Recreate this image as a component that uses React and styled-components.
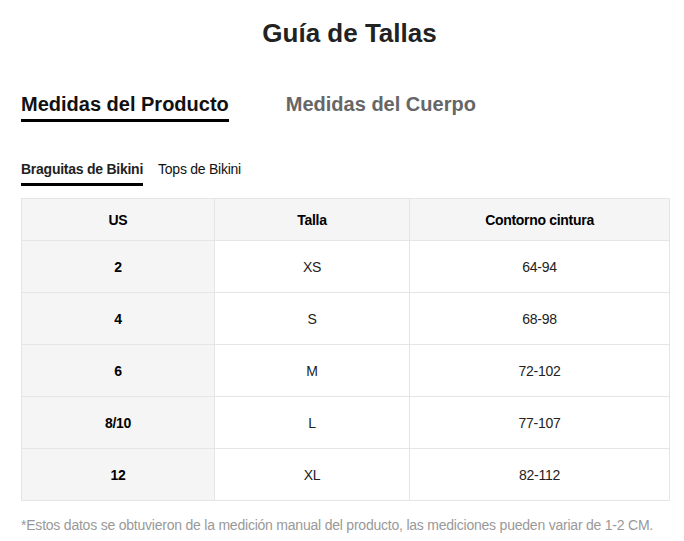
import React, { useState } from "react";
import styled, { createGlobalStyle } from "styled-components";

const Global = createGlobalStyle`
  html, body { margin: 0; padding: 0; background: #fff; }
  body { font-family: "Liberation Sans", Arial, sans-serif; color: #222; }
  * { box-sizing: border-box; }
`;

const Page = styled.div`
  width: 684px;
  padding: 18px 14px 0 21px;
`;

const Title = styled.h1`
  margin: 0;
  text-align: center;
  font-size: 26px;
  font-weight: 700;
  line-height: 30px;
  color: #222;
  padding-left: 8px;
`;

const MainTabs = styled.div`
  display: flex;
  gap: 57px;
  margin-top: 44px;
`;

const MainTab = styled.div`
  font-size: 20px;
  font-weight: 700;
  line-height: 24px;
  padding-bottom: 3px;
  color: ${(p) => (p.$active ? "#111" : "#666")};
  border-bottom: 3px solid ${(p) => (p.$active ? "#000" : "transparent")};
  cursor: pointer;
`;

const SubTabs = styled.div`
  display: flex;
  gap: 15px;
  margin-top: 39px;
`;

const SubTab = styled.div`
  font-size: 14px;
  letter-spacing: -0.25px;
  font-weight: ${(p) => (p.$active ? 700 : 400)};
  line-height: 17px;
  padding-bottom: 5px;
  color: ${(p) => (p.$active ? "#222" : "#111")};
  border-bottom: 3px solid ${(p) => (p.$active ? "#000" : "transparent")};
  cursor: pointer;
`;

const Table = styled.div`
  margin-top: 12px;
  display: grid;
  grid-template-columns: 193px 195px 1fr;
  border-top: 1px solid #e5e5e5;
  border-left: 1px solid #e5e5e5;
  width: 649px;
`;

const Cell = styled.div`
  height: ${(p) => (p.$head ? "42px" : "52px")};
  display: flex;
  align-items: center;
  justify-content: center;
  font-size: 14px;
  letter-spacing: -0.3px;
  font-weight: ${(p) => (p.$bold ? 700 : 400)};
  color: ${(p) => (p.$bold ? "#000" : "#222")};
  background: ${(p) => (p.$shade ? "#f5f5f5" : "#fff")};
  border-right: 1px solid #e5e5e5;
  border-bottom: 1px solid #e5e5e5;
`;

const Note = styled.p`
  margin: 15px 0 0;
  font-size: 14px;
  letter-spacing: -0.22px;
  line-height: 18px;
  color: #999;
  white-space: nowrap;
`;

const rows = [
  ["2", "XS", "64-94"],
  ["4", "S", "68-98"],
  ["6", "M", "72-102"],
  ["8/10", "L", "77-107"],
  ["12", "XL", "82-112"],
];

export default function App() {
  const [main, setMain] = useState(0);
  const [sub, setSub] = useState(0);
  return (
    <Page>
      <Global />
      <Title>Guía de Tallas</Title>
      <MainTabs>
        <MainTab $active={main === 0} onClick={() => setMain(0)}>Medidas del Producto</MainTab>
        <MainTab $active={main === 1} onClick={() => setMain(1)}>Medidas del Cuerpo</MainTab>
      </MainTabs>
      <SubTabs>
        <SubTab $active={sub === 0} onClick={() => setSub(0)}>Braguitas de Bikini</SubTab>
        <SubTab $active={sub === 1} onClick={() => setSub(1)}>Tops de Bikini</SubTab>
      </SubTabs>
      <Table>
        <Cell $head $bold $shade>US</Cell>
        <Cell $head $bold $shade>Talla</Cell>
        <Cell $head $bold $shade>Contorno cintura</Cell>
        {rows.map((r) => (
          <React.Fragment key={r[0]}>
            <Cell $bold $shade>{r[0]}</Cell>
            <Cell>{r[1]}</Cell>
            <Cell>{r[2]}</Cell>
          </React.Fragment>
        ))}
      </Table>
      <Note>*Estos datos se obtuvieron de la medición manual del producto, las mediciones pueden variar de 1-2 CM.</Note>
    </Page>
  );
}
